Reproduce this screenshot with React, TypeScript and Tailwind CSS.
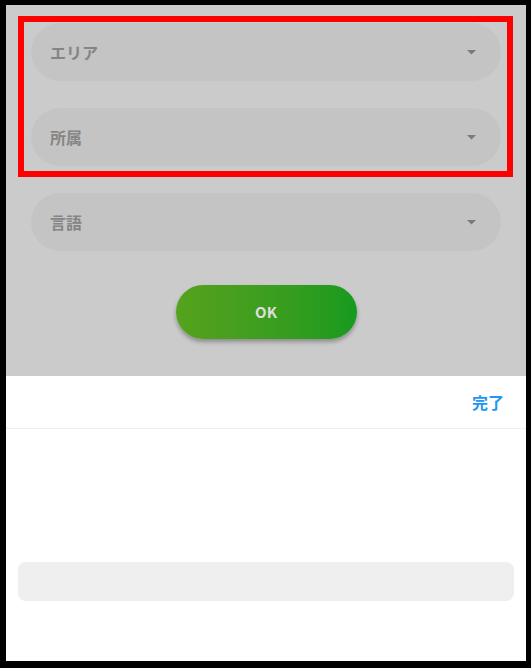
import React from "react";

const font = { fontFamily: '"Noto Sans CJK JP", "Noto Sans", sans-serif' };

function Select({ label }: { label: string }) {
  return (
    <div className="flex h-[58px] items-center justify-between rounded-full bg-[#c4c4c4] pl-[19px] pr-[25px]">
      <span className="text-[16px] font-bold leading-none text-[#858585]">{label}</span>
      <svg width="9" height="5" viewBox="0 0 9 5">
        <path d="M0 0 L9 0 L4.5 4.5 Z" fill="#7a7a7a" />
      </svg>
    </div>
  );
}

export default function App() {
  return (
    <div
      className="relative flex h-[668px] w-[531px] flex-col bg-black pb-[7px] pl-[6px] pr-[5px] pt-[5px]"
      style={font}
    >
      <div className="flex flex-1 flex-col overflow-hidden">
        <div className="flex h-[371px] flex-col bg-[#cbcbcb] px-[25px] pt-[18px]">
          <div className="flex flex-col gap-[27px]">
            <Select label="エリア" />
            <Select label="所属" />
            <Select label="言語" />
          </div>
          <div className="mt-[34px] flex justify-center">
            <div className="flex h-[54px] w-[181px] items-center justify-center rounded-full bg-gradient-to-r from-[#55a21d] to-[#149a1f] shadow-[0_3px_4px_rgba(0,0,0,0.3)]">
              <span className="text-[15px] font-bold text-[#dedede]">OK</span>
            </div>
          </div>
        </div>
        <div className="flex flex-1 flex-col bg-white">
          <div className="flex h-[53px] items-center justify-end border-b border-[#eeeeee] pr-[22px]">
            <span className="text-[16px] font-bold text-[#2196f3]">完了</span>
          </div>
          <div className="mx-[12px] mt-[133px] h-[39px] rounded-[8px] bg-[#efefef]" />
        </div>
      </div>
      <div className="absolute left-[18px] top-[16px] h-[161px] w-[495px] border-[6px] border-[#ff0000]" />
    </div>
  );
}
